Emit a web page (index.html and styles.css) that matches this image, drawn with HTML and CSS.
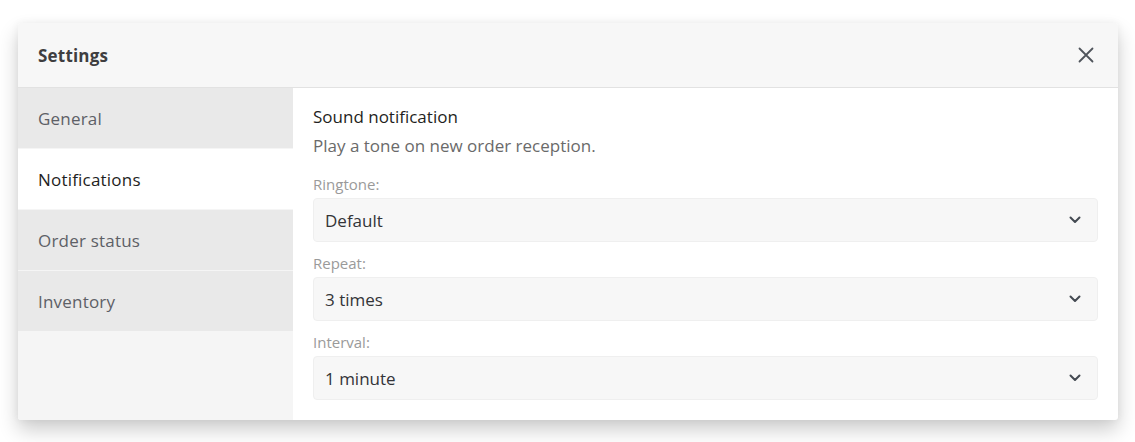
FILE: index.html
```html
<!DOCTYPE html>
<html>
<head>
<meta charset="utf-8">
<link rel="stylesheet" href="styles.css">
</head>
<body>
<div class="dialog">
  <div class="header">
    <div class="title">Settings</div>
    <button class="close" aria-label="Close">
      <svg width="16" height="16" viewBox="0 0 16 16"><path d="M1.5 1.5L14.5 14.5M14.5 1.5L1.5 14.5" stroke="#50555c" stroke-width="1.8" stroke-linecap="round" fill="none"/></svg>
    </button>
  </div>
  <div class="body">
    <nav class="sidebar">
      <div class="tab">General</div>
      <div class="tab active">Notifications</div>
      <div class="tab">Order status</div>
      <div class="tab">Inventory</div>
    </nav>
    <section class="content">
      <div class="heading">Sound notification</div>
      <div class="desc">Play a tone on new order reception.</div>
      <div class="field">
        <div class="label">Ringtone:</div>
        <div class="select"><span>Default</span><svg class="chev" width="12" height="8" viewBox="0 0 12 8"><path d="M1.5 1.5L6 6L10.5 1.5" stroke="#444a52" stroke-width="2" fill="none" stroke-linecap="round" stroke-linejoin="round"/></svg></div>
      </div>
      <div class="field">
        <div class="label">Repeat:</div>
        <div class="select"><span>3 times</span><svg class="chev" width="12" height="8" viewBox="0 0 12 8"><path d="M1.5 1.5L6 6L10.5 1.5" stroke="#444a52" stroke-width="2" fill="none" stroke-linecap="round" stroke-linejoin="round"/></svg></div>
      </div>
      <div class="field">
        <div class="label">Interval:</div>
        <div class="select"><span>1 minute</span><svg class="chev" width="12" height="8" viewBox="0 0 12 8"><path d="M1.5 1.5L6 6L10.5 1.5" stroke="#444a52" stroke-width="2" fill="none" stroke-linecap="round" stroke-linejoin="round"/></svg></div>
      </div>
    </section>
  </div>
</div>
</body>
</html>
```
FILE: styles.css
```css
html, body {
  margin: 0;
  padding: 0;
  background: #ffffff;
}
body {
  font-family: "Open Sans", "Noto Sans", sans-serif;
  padding: 23px 17px 22px 18px;
  min-height: 442px;
  box-sizing: border-box;
}
.dialog {
  width: 1100px;
  background: #ffffff;
  border-radius: 3px;
  box-shadow: 0 10px 20px rgba(0, 0, 0, 0.2), 0 0 8px rgba(0, 0, 0, 0.05);
  overflow: hidden;
}
.header {
  height: 65px;
  box-sizing: border-box;
  background: #f7f7f7;
  border-bottom: 1px solid #e2e2e2;
  display: flex;
  align-items: center;
  justify-content: space-between;
  padding: 0 24px 0 20px;
}
.title {
  font-size: 17px;
  font-weight: 700;
  letter-spacing: 0.2px;
  color: #3e3e40;
}
.close {
  border: 0;
  background: none;
  padding: 0;
  width: 16px;
  height: 16px;
  display: flex;
}
.body {
  display: flex;
}
.sidebar {
  width: 275px;
  background: #f5f5f5;
  display: flex;
  flex-direction: column;
  gap: 1px;
}
.tab {
  height: 60px;
  display: flex;
  align-items: center;
  padding-left: 20px;
  font-size: 17px;
  letter-spacing: 0.2px;
  color: #5d6066;
  background: #e9e9e9;
}
.tab.active {
  background: #ffffff;
  color: #1e1e22;
}
.content {
  flex: 1;
  padding: 17px 20px 20px 20px;
}
.heading {
  font-size: 17px;
  color: #1f1f22;
  line-height: 24px;
}
.desc {
  font-size: 17px;
  color: #6a6a6a;
  line-height: 24px;
  margin-top: 5px;
}
.field {
  margin-top: 16px;
}
.label {
  font-size: 15px;
  color: #9a9a9a;
  line-height: 20px;
  margin-bottom: 4px;
}
.select {
  height: 44px;
  box-sizing: border-box;
  background: #f7f7f7;
  border: 1px solid #efefef;
  border-radius: 4px;
  display: flex;
  align-items: center;
  justify-content: space-between;
  padding: 0 16px 0 11px;
  font-size: 17px;
  color: #333438;
}
.field + .field {
  margin-top: 11px;
}
.chev {
  display: block;
}
```
